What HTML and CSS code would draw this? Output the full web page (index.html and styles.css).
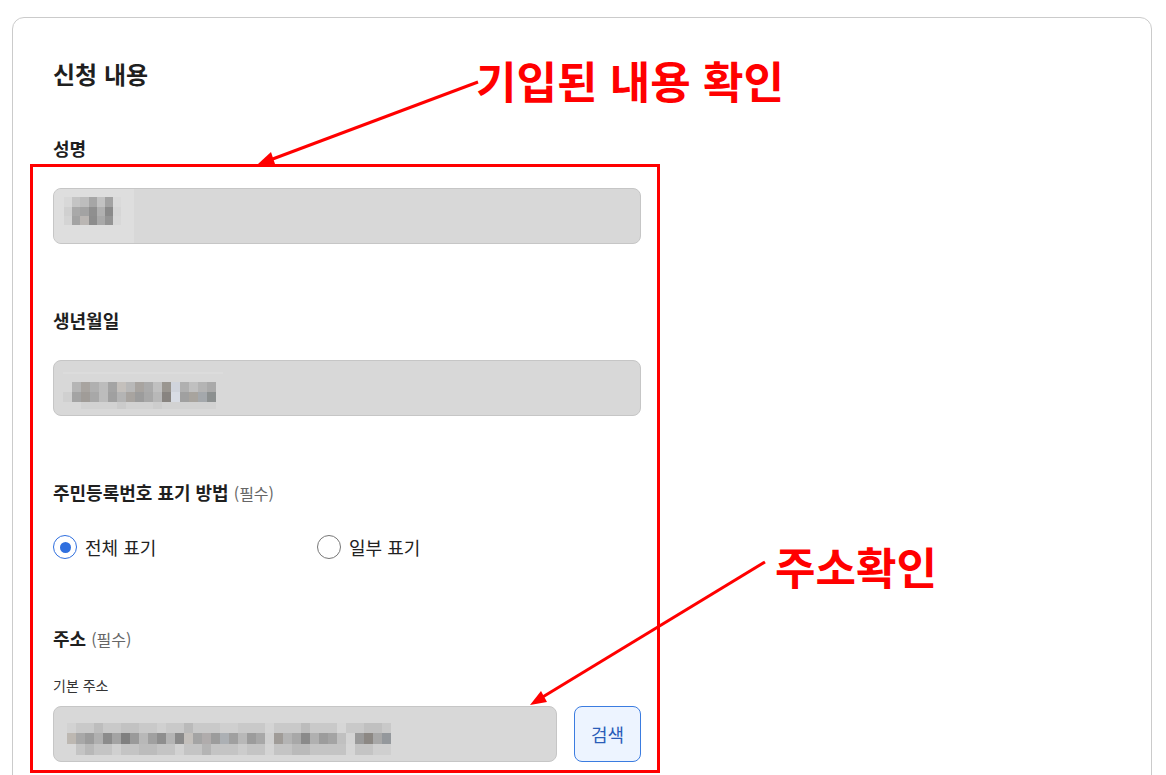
FILE: index.html
```html
<!DOCTYPE html>
<html lang="ko">
  <head>
    <meta charset="UTF-8" />
    <meta name="viewport" content="width=device-width, initial-scale=1.0" />
    <title>신청 내용</title>
    <link rel="stylesheet" href="styles.css">
  </head>
  <body>
    <div class="card">
      <h2 class="card-title">신청 내용</h2>

      <div class="field">
        <div class="field-label">성명</div>
        <div class="field-value name-value">
          <svg width="80" height="54" viewBox="0 0 80 54">
            <rect width="80" height="54" fill="#dedede"/>
            <rect x="10" y="8" width="8" height="10" fill="#d8d8d8"/>
            <rect x="18" y="8" width="8" height="10" fill="#c4c4c4"/>
            <rect x="26" y="8" width="9" height="10" fill="#bdbdbd"/>
            <rect x="35" y="8" width="8" height="10" fill="#a6a6a6"/>
            <rect x="43" y="8" width="8" height="10" fill="#c2c2c2"/>
            <rect x="51" y="8" width="8" height="10" fill="#a2a2a2"/>
            <rect x="59" y="8" width="8" height="10" fill="#dadada"/>
            <rect x="10" y="18" width="8" height="9" fill="#d0d0d0"/>
            <rect x="18" y="18" width="8" height="9" fill="#a9a9a9"/>
            <rect x="26" y="18" width="9" height="9" fill="#a3a3a3"/>
            <rect x="35" y="18" width="8" height="9" fill="#8f8f8f"/>
            <rect x="43" y="18" width="8" height="9" fill="#b0b0b0"/>
            <rect x="51" y="18" width="8" height="9" fill="#8a8a8a"/>
            <rect x="59" y="18" width="8" height="9" fill="#d6d6d6"/>
            <rect x="10" y="27" width="8" height="9" fill="#d4d4d4"/>
            <rect x="18" y="27" width="8" height="9" fill="#a3a3a3"/>
            <rect x="26" y="27" width="9" height="9" fill="#bab6b3"/>
            <rect x="35" y="27" width="8" height="9" fill="#8d8d8d"/>
            <rect x="43" y="27" width="8" height="9" fill="#a9a9a9"/>
            <rect x="51" y="27" width="8" height="9" fill="#949494"/>
            <rect x="59" y="27" width="8" height="9" fill="#d8d8d8"/>
          </svg>
        </div>
      </div>

      <div class="field">
        <div class="field-label">생년월일</div>
        <div class="field-value">
          <svg class="blur" width="170" height="44" viewBox="0 0 170 44">
            <rect x="9" y="6" width="160" height="2" fill="#dcdcdc"/>
            <rect x="9" y="16" width="9" height="10" fill="#d8d8d8"/>
            <rect x="18" y="16" width="9" height="10" fill="#b5b5b5"/>
            <rect x="27" y="16" width="9" height="10" fill="#a8a4a0"/>
            <rect x="36" y="16" width="9" height="10" fill="#b0b0b0"/>
            <rect x="45" y="16" width="9" height="10" fill="#bcbcbc"/>
            <rect x="54" y="16" width="9" height="10" fill="#a4a4a4"/>
            <rect x="63" y="16" width="9" height="10" fill="#c4c0bc"/>
            <rect x="72" y="16" width="9" height="10" fill="#b8b8b8"/>
            <rect x="81" y="16" width="9" height="10" fill="#a8a4a0"/>
            <rect x="90" y="16" width="9" height="10" fill="#ababab"/>
            <rect x="99" y="16" width="9" height="10" fill="#c0c0c0"/>
            <rect x="108" y="16" width="9" height="10" fill="#9a9690"/>
            <rect x="117" y="16" width="9" height="10" fill="#d0d4dc"/>
            <rect x="126" y="16" width="9" height="10" fill="#b0b0b0"/>
            <rect x="135" y="16" width="9" height="10" fill="#c0c0c0"/>
            <rect x="144" y="16" width="9" height="10" fill="#b4b4b4"/>
            <rect x="153" y="16" width="9" height="10" fill="#aaaaaa"/>
            <rect x="9" y="26" width="9" height="10" fill="#d0d0d0"/>
            <rect x="18" y="26" width="9" height="10" fill="#a4a4a4"/>
            <rect x="27" y="26" width="9" height="10" fill="#a09c98"/>
            <rect x="36" y="26" width="9" height="10" fill="#a8a8a8"/>
            <rect x="45" y="26" width="9" height="10" fill="#bcbcbc"/>
            <rect x="54" y="26" width="9" height="10" fill="#a0a0a0"/>
            <rect x="63" y="26" width="9" height="10" fill="#b4b4b4"/>
            <rect x="72" y="26" width="9" height="10" fill="#a8a4a0"/>
            <rect x="81" y="26" width="9" height="10" fill="#9c9c9c"/>
            <rect x="90" y="26" width="9" height="10" fill="#a8a8a8"/>
            <rect x="99" y="26" width="9" height="10" fill="#b8b8b8"/>
            <rect x="108" y="26" width="9" height="10" fill="#888480"/>
            <rect x="117" y="26" width="9" height="10" fill="#d8dce4"/>
            <rect x="126" y="26" width="9" height="10" fill="#a0a0a0"/>
            <rect x="135" y="26" width="9" height="10" fill="#a8a49e"/>
            <rect x="144" y="26" width="9" height="10" fill="#a4a8ac"/>
            <rect x="153" y="26" width="9" height="10" fill="#8c9090"/>
            <rect x="27" y="36" width="135" height="7" fill="#d2d2d2"/>
            <rect x="63" y="36" width="9" height="7" fill="#cbcbcb"/>
            <rect x="99" y="36" width="9" height="7" fill="#cdcdcd"/>
          </svg>
        </div>
      </div>

      <div class="field field-choice">
        <div class="field-label">주민등록번호 표기 방법 <span class="required">(필수)</span></div>
        <div class="radio-group">
          <label class="radio"><span class="radio-mark checked"></span>전체 표기</label>
          <label class="radio"><span class="radio-mark"></span>일부 표기</label>
        </div>
      </div>

      <div class="field">
        <div class="field-label">주소 <span class="required">(필수)</span></div>
        <div class="sub-label">기본 주소</div>
        <div class="address-row">
          <div class="field-value address-value">
            <svg class="blur" width="340" height="44" viewBox="0 0 340 44">
              <rect x="13" y="11" width="324" height="10" fill="#c9c9c9"/>
              <rect x="13" y="11" width="9" height="10" fill="#d2d2d2"/>
              <rect x="40" y="11" width="9" height="10" fill="#bdbdbd"/>
              <rect x="67" y="11" width="18" height="10" fill="#c2c2c2"/>
              <rect x="103" y="11" width="9" height="10" fill="#d0d0d0"/>
              <rect x="130" y="11" width="9" height="10" fill="#bababa"/>
              <rect x="166" y="11" width="18" height="10" fill="#cfcfcf"/>
              <rect x="211" y="11" width="9" height="10" fill="#d4d4d4"/>
              <rect x="247" y="11" width="9" height="10" fill="#bcbcbc"/>
              <rect x="283" y="11" width="9" height="10" fill="#d6d6d6"/>
              <rect x="310" y="11" width="18" height="10" fill="#c0c0c0"/>
              <rect x="13" y="21" width="9" height="11" fill="#bdb8b2"/>
              <rect x="22" y="21" width="9" height="11" fill="#a8a8a8"/>
              <rect x="31" y="21" width="9" height="11" fill="#9c9c9c"/>
              <rect x="40" y="21" width="9" height="11" fill="#b0b0b0"/>
              <rect x="49" y="21" width="9" height="11" fill="#8c8c8c"/>
              <rect x="58" y="21" width="9" height="11" fill="#a4a4a4"/>
              <rect x="67" y="21" width="9" height="11" fill="#808080"/>
              <rect x="76" y="21" width="9" height="11" fill="#9a9a9a"/>
              <rect x="85" y="21" width="9" height="11" fill="#b8b8b8"/>
              <rect x="94" y="21" width="9" height="11" fill="#a0a0a0"/>
              <rect x="103" y="21" width="9" height="11" fill="#8e8e8e"/>
              <rect x="112" y="21" width="9" height="11" fill="#b4b4b4"/>
              <rect x="121" y="21" width="9" height="11" fill="#8a8a8a"/>
              <rect x="130" y="21" width="9" height="11" fill="#c4c0bc"/>
              <rect x="139" y="21" width="9" height="11" fill="#a4a4a4"/>
              <rect x="148" y="21" width="9" height="11" fill="#b0acac"/>
              <rect x="157" y="21" width="9" height="11" fill="#9c9c9c"/>
              <rect x="166" y="21" width="9" height="11" fill="#acb0b4"/>
              <rect x="175" y="21" width="9" height="11" fill="#a0a0a0"/>
              <rect x="184" y="21" width="9" height="11" fill="#b8b8b8"/>
              <rect x="193" y="21" width="9" height="11" fill="#9c9c9c"/>
              <rect x="202" y="21" width="9" height="11" fill="#a8a8a8"/>
              <rect x="211" y="21" width="9" height="11" fill="#d0d0d0"/>
              <rect x="220" y="21" width="9" height="11" fill="#a09c98"/>
              <rect x="229" y="21" width="9" height="11" fill="#b4b4b4"/>
              <rect x="238" y="21" width="9" height="11" fill="#a8a8a8"/>
              <rect x="247" y="21" width="9" height="11" fill="#8a8a8a"/>
              <rect x="256" y="21" width="9" height="11" fill="#b0b0b0"/>
              <rect x="265" y="21" width="9" height="11" fill="#9c9c9c"/>
              <rect x="274" y="21" width="9" height="11" fill="#a4a4a4"/>
              <rect x="283" y="21" width="9" height="11" fill="#c0c0c0"/>
              <rect x="292" y="21" width="9" height="11" fill="#d4d4d4"/>
              <rect x="301" y="21" width="9" height="11" fill="#9a9a9a"/>
              <rect x="310" y="21" width="9" height="11" fill="#8c8884"/>
              <rect x="319" y="21" width="9" height="11" fill="#a8a8a8"/>
              <rect x="328" y="21" width="9" height="11" fill="#94989c"/>
              <rect x="22" y="32" width="315" height="11" fill="#c4c4c4"/>
              <rect x="31" y="32" width="9" height="11" fill="#b8b8b8"/>
              <rect x="58" y="32" width="9" height="11" fill="#d0d0d0"/>
              <rect x="85" y="32" width="18" height="11" fill="#bcbcbc"/>
              <rect x="121" y="32" width="9" height="11" fill="#d2d2d2"/>
              <rect x="148" y="32" width="9" height="11" fill="#b4b4b4"/>
              <rect x="184" y="32" width="9" height="11" fill="#cccccc"/>
              <rect x="211" y="32" width="9" height="11" fill="#d4d4d4"/>
              <rect x="238" y="32" width="18" height="11" fill="#bababa"/>
              <rect x="292" y="32" width="9" height="11" fill="#d6d6d6"/>
              <rect x="319" y="32" width="18" height="11" fill="#cfcfcf"/>
            </svg>
          </div>
          <button class="search-button">검색</button>
        </div>
      </div>
    </div>

    <svg class="annotation" width="1166" height="775" viewBox="0 0 1166 775">
      <rect x="31.5" y="165.5" width="627" height="606" fill="none" stroke="#ff0000" stroke-width="3"/>
      <line x1="478" y1="82" x2="270" y2="160" stroke="#ff0000" stroke-width="3"/>
      <polygon points="258,164 275,164 271,152" fill="#ff0000"/>
      <line x1="765" y1="562" x2="541" y2="698" stroke="#ff0000" stroke-width="3"/>
      <polygon points="530,705 547,702 541,691" fill="#ff0000"/>
    </svg>
    <div class="note note-fields">기입된 내용 확인</div>
    <div class="note note-address">주소확인</div>
  </body>
</html>
```

FILE: styles.css
```css
* {
  margin: 0;
  padding: 0;
  box-sizing: border-box;
  font-family: "Noto Sans CJK KR", "Noto Sans", sans-serif;
}

body {
  background-color: #fff;
  color: #1f1f1f;
  padding: 17px 14px 0 12px;
  position: relative;
  overflow: hidden;
  height: 775px;
}

.card {
  border: 1px solid #cbcbcb;
  border-radius: 12px;
  padding: 40px 40px 60px;
  min-height: 820px;
}

.card-title {
  font-size: 24px;
  line-height: 32px;
  font-weight: 700;
  margin-bottom: 46px;
}

.field {
  margin-bottom: 64px;
}

.field-choice {
  margin-bottom: 67px;
}

.field-label {
  font-size: 18px;
  line-height: 24px;
  font-weight: 700;
  margin-bottom: 28px;
}

.field-choice .field-label {
  margin-bottom: 30px;
}

.required {
  font-size: 16px;
  font-weight: 400;
  color: #666;
}

.sub-label {
  font-size: 14px;
  line-height: 20px;
  color: #333;
  margin-top: -4px;
  margin-bottom: 11px;
}

.field-value {
  width: 588px;
  height: 56px;
  background-color: #d8d8d8;
  border: 1px solid #c6c6c6;
  border-radius: 8px;
  overflow: hidden;
  display: flex;
  align-items: center;
}

.name-value {
  align-items: flex-start;
}

.radio-group {
  display: flex;
}

.radio {
  width: 264px;
  display: flex;
  align-items: center;
  gap: 8px;
  font-size: 18px;
  line-height: 24px;
  color: #222;
}

.radio-mark {
  width: 24px;
  height: 24px;
  border-radius: 50%;
  border: 1px solid #777;
  background-color: #fff;
  display: flex;
  justify-content: center;
  align-items: center;
}

.radio-mark.checked {
  border: 1.5px solid #2f6fdf;
}

.radio-mark.checked::after {
  content: "";
  width: 11px;
  height: 11px;
  border-radius: 50%;
  background-color: #2f6fdf;
}

.address-row {
  display: flex;
  gap: 17px;
}

.address-value {
  width: 504px;
}

.search-button {
  width: 67px;
  height: 56px;
  border: 1px solid #3b7ce0;
  border-radius: 8px;
  background-color: #edf4ff;
  color: #2a5cb8;
  font-size: 18px;
  cursor: pointer;
}

.annotation {
  position: absolute;
  top: 0;
  left: 0;
  pointer-events: none;
}

.note {
  position: absolute;
  color: #ff0000;
  font-size: 44px;
  line-height: 40px;
  font-weight: 700;
  white-space: nowrap;
}

.note-fields {
  top: 60px;
  left: 476px;
}

.note-address {
  top: 546px;
  left: 775px;
}
```
